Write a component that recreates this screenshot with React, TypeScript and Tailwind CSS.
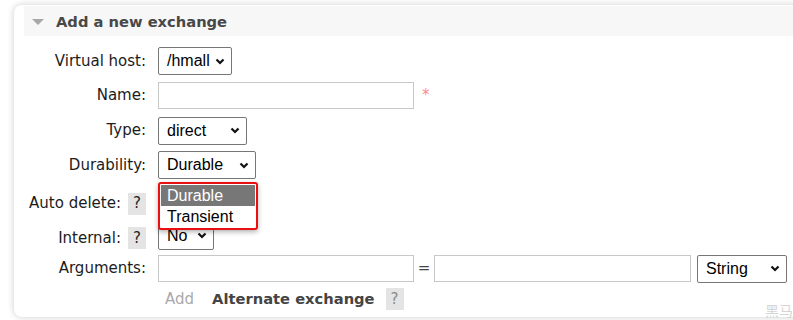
function Chevron() {
  return (
    <svg width="10" height="7" viewBox="0 0 10 7" className="shrink-0">
      <path d="M1.5 1.5 L5 5 L8.5 1.5" fill="none" stroke="#111" strokeWidth="2.2" />
    </svg>
  );
}

function Select({ value, className }: { value: string; className: string }) {
  return (
    <div
      className={`flex h-[28px] items-center justify-between rounded-[2px] border border-[#767676] bg-white pl-[8px] pr-[6px] font-['Liberation_Sans',Arial,sans-serif] text-[16px] text-black ${className}`}
    >
      <span>{value}</span>
      <Chevron />
    </div>
  );
}

function Help({ faded }: { faded?: boolean }) {
  return (
    <span
      className={`flex h-[22px] w-[18px] items-center justify-center bg-[#e4e4e4] ${
        faded ? "text-[#8a8a8a]" : "text-[#222]"
      }`}
    >
      ?
    </span>
  );
}

function Input({ className }: { className: string }) {
  return <div className={`h-[27px] border border-[#c8c8c8] bg-white ${className}`} />;
}

function Label({ text, help }: { text: string; help?: boolean }) {
  return (
    <div className="flex w-[122px] items-center justify-end gap-[7px]">
      <span>{text}</span>
      {help && <Help />}
    </div>
  );
}

function App() {
  return (
    <div className="relative h-[320px] w-[793px] overflow-hidden bg-white font-['DejaVu_Sans',Verdana,sans-serif] text-[15px] text-[#1c1c1c]">
      <div className="ml-[14px] mt-[5px] h-[312px] w-[800px] rounded-[8px] bg-white pl-[10px] pt-[1px] shadow-[0_0_7px_rgba(0,0,0,0.2)]">
        <div className="flex h-[30px] items-center bg-[#f7f7f7] pl-[8px] pt-[3px]">
          <svg width="12" height="6" viewBox="0 0 12 6" className="mr-[12px] mb-[2px]">
            <path d="M0 0 L12 0 L6 6 Z" fill="#a8a8a8" />
          </svg>
          <span className="text-[14.7px] font-bold text-[#484848]">Add a new exchange</span>
        </div>

        <div className="mt-[8px]">
          <div className="flex h-[34px] items-center">
            <Label text="Virtual host:" />
            <div className="ml-[12px]">
              <Select value="/hmall" className="w-[74px]" />
            </div>
          </div>

          <div className="flex h-[35px] items-center">
            <Label text="Name:" />
            <div className="ml-[12px] flex items-center">
              <Input className="w-[256px]" />
              <span className="ml-[8px] text-[#f88]">*</span>
            </div>
          </div>

          <div className="flex h-[35px] items-center">
            <Label text="Type:" />
            <div className="ml-[12px]">
              <Select value="direct" className="w-[89px]" />
            </div>
          </div>

          <div className="flex h-[34px] items-center">
            <Label text="Durability:" />
            <div className="relative z-10 ml-[12px]">
              <Select value="Durable" className="w-[98px]" />
              <div className="absolute left-0 top-[31px] w-[100px] rounded-[3px] border-2 border-[#e81010] bg-white p-[1px] font-['Liberation_Sans',Arial,sans-serif] text-[16px] text-black shadow-[0_2px_5px_rgba(0,0,0,0.3)]">
                <div className="flex h-[21px] items-center bg-[#777] pl-[6px] text-white">Durable</div>
                <div className="flex h-[21px] items-center pl-[6px]">Transient</div>
              </div>
            </div>
          </div>

          <div className="flex h-[37px] items-center">
            <div className="mt-[6px]">
              <Label text="Auto delete:" help />
            </div>
            <div className="ml-[12px]">
              <div className="h-[28px] w-[56px] rounded-[2px] border border-[#767676] bg-white" />
            </div>
          </div>

          <div className="flex h-[33px] items-center">
            <div className="mt-[5px]">
              <Label text="Internal:" help />
            </div>
            <div className="ml-[12px]">
              <Select value="No" className="w-[56px]" />
            </div>
          </div>

          <div className="flex h-[33px] items-center">
            <Label text="Arguments:" />
            <div className="ml-[12px] flex items-center">
              <Input className="w-[256px]" />
              <span className="w-[20px] text-center text-[#444]">=</span>
              <Input className="w-[257px]" />
              <Select value="String" className="ml-[6px] w-[90px]" />
            </div>
          </div>

          <div className="flex h-[28px] items-center">
            <div className="w-[122px]" />
            <div className="ml-[19px] flex items-center">
              <span className="text-[#aaa]">Add</span>
              <span className="ml-[18px] text-[14.7px] font-bold text-[#444]">Alternate exchange</span>
              <span className="ml-[11px]">
                <Help faded />
              </span>
            </div>
          </div>
        </div>
      </div>

      <span className="absolute bottom-[1px] right-0 font-['Noto_Sans_CJK_SC',sans-serif] text-[14px] leading-[18px] text-[#d4d4d4]">
        黑马
      </span>
    </div>
  );
}

export default App;
